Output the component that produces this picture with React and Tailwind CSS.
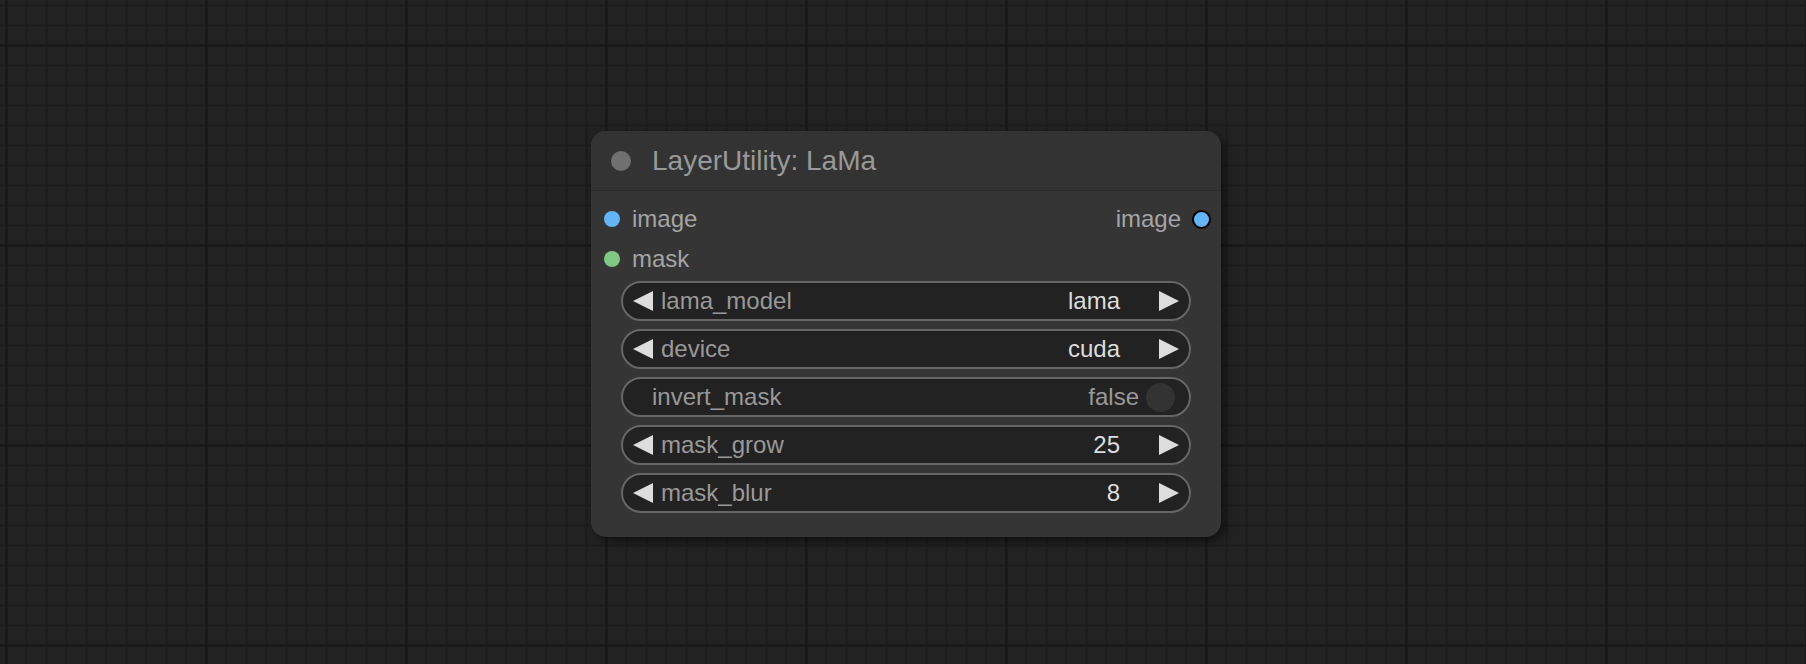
import React from 'react';

const font = { fontFamily: '"Liberation Sans", Arial, sans-serif' };

const LeftArrow = () => (
  <svg width="20" height="20" viewBox="0 0 20 20" className="shrink-0">
    <polygon points="20,0 0,10 20,20" fill="#dddddd" />
  </svg>
);

const RightArrow = () => (
  <svg width="20" height="20" viewBox="0 0 20 20" className="shrink-0">
    <polygon points="0,0 20,10 0,20" fill="#dddddd" />
  </svg>
);

// combo / number widget with arrows on both sides
const ArrowWidget = ({ label, value }) => (
  <div className="h-[40px] rounded-full border-2 border-[#666] bg-[#222] flex items-center pl-[10px] pr-[10px]">
    <LeftArrow />
    <span className="ml-[8px] text-[24px] leading-none text-[#999]">{label}</span>
    <span className="ml-auto text-[24px] leading-none text-[#ddd]">{value}</span>
    <span className="w-[39px]" />
    <RightArrow />
  </div>
);

const ToggleWidget = ({ label, value }) => (
  <div className="h-[40px] rounded-full border-2 border-[#666] bg-[#222] flex items-center pl-[29px] pr-[14px]">
    <span className="text-[24px] leading-none text-[#999]">{label}</span>
    <span className="ml-auto text-[24px] leading-none text-[#999]">{value}</span>
    <span className="ml-[7px] w-[29px] h-[29px] rounded-full bg-[#333]" />
  </div>
);

const widgets = [
  { type: 'combo', label: 'lama_model', value: 'lama' },
  { type: 'combo', label: 'device', value: 'cuda' },
  { type: 'toggle', label: 'invert_mask', value: 'false' },
  { type: 'number', label: 'mask_grow', value: '25' },
  { type: 'number', label: 'mask_blur', value: '8' },
];

export default function App() {
  return (
    <div
      className="relative w-[1806px] h-[664px] overflow-hidden bg-[#222222] bg-[linear-gradient(to_right,transparent_0px,#171717_1px,#171717_2px,transparent_3px),linear-gradient(to_bottom,transparent_0px,#171717_1px,#171717_2px,transparent_3px),linear-gradient(to_right,transparent_0px,#1c1c1c_1px,#1c1c1c_2px,transparent_3px),linear-gradient(to_bottom,transparent_0px,#1c1c1c_1px,#1c1c1c_2px,transparent_3px)] [background-size:200px_200px,200px_200px,20px_20px,20px_20px] [background-position:5px_0px,0px_44px,5px_0px,0px_4px]"
      style={font}
    >
      {/* node on the canvas */}
      <div className="absolute left-[591px] top-[131px] w-[630px] h-[406px] rounded-[15px] bg-[#353535] shadow-[4px_4px_8px_rgba(0,0,0,0.5)] flex flex-col overflow-hidden">
        <div className="h-[60px] shrink-0 bg-[#333333] border-b border-[#2b2b2b] flex items-center pl-[20px]">
          <span className="w-[20px] h-[20px] rounded-full bg-[#707070]" />
          <span className="ml-[21px] text-[28px] leading-none text-[#999]">LayerUtility: LaMa</span>
        </div>

        <div className="flex flex-col pt-[8px]">
          <div className="h-[40px] flex items-center pl-[13px] pr-[10px]">
            <span className="w-[16px] h-[16px] rounded-full bg-[#64b5f6]" />
            <span className="ml-[12px] text-[24px] leading-none text-[#a4a4a4]">image</span>
            <span className="ml-auto text-[24px] leading-none text-[#a4a4a4]">image</span>
            <span className="ml-[11px] w-[19px] h-[19px] rounded-full bg-[#64b5f6] border-2 border-black" />
          </div>
          <div className="h-[40px] flex items-center pl-[13px]">
            <span className="w-[16px] h-[16px] rounded-full bg-[#81c784]" />
            <span className="ml-[12px] text-[24px] leading-none text-[#a4a4a4]">mask</span>
          </div>
        </div>

        <div className="flex flex-col gap-[8px] mt-[2px] px-[30px]">
          {widgets.map((w) =>
            w.type === 'toggle' ? (
              <ToggleWidget key={w.label} label={w.label} value={w.value} />
            ) : (
              <ArrowWidget key={w.label} label={w.label} value={w.value} />
            )
          )}
        </div>
      </div>
    </div>
  );
}
